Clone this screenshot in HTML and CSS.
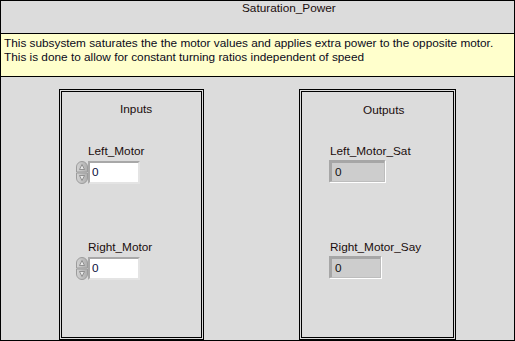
FILE: index.html
```html
<!DOCTYPE html>
<html>
<head>
<meta charset="utf-8">
<link rel="stylesheet" href="styles.css">
</head>
<body>
<div class="frame">
  <div class="title">Saturation_Power</div>
  <div class="desc">This subsystem saturates the the motor values and applies extra power to the opposite motor.<br>This is done to allow for constant turning ratios independent of speed</div>
  <div class="panels">
    <div class="box box-in">
      <div class="heading">Inputs</div>
      <div class="label lbl-first">Left_Motor</div>
      <div class="control">
        <svg class="spin" width="12" height="23" viewBox="0 0 12 23">
          <defs>
            <linearGradient id="g1" x1="0" y1="0" x2="1" y2="0">
              <stop offset="0" stop-color="#d4d4d4"/>
              <stop offset="1" stop-color="#aeaeae"/>
            </linearGradient>
          </defs>
          <path d="M0.5 11 V6 A5.5 5.5 0 0 1 11.5 6 V11 Z" fill="url(#g1)" stroke="#9c9c9c"/>
          <path d="M0.5 12 V17 A5.5 5.5 0 0 0 11.5 17 V12 Z" fill="url(#g1)" stroke="#9c9c9c"/>
          <path d="M6 3.5 L8.5 8.5 H3.5 Z" fill="#e8e8e8" stroke="#808080" stroke-width="0.8"/>
          <path d="M6 19.5 L8.5 14.5 H3.5 Z" fill="#e8e8e8" stroke="#808080" stroke-width="0.8"/>
        </svg>
        <div class="num-in">0</div>
      </div>
      <div class="label lbl-second">Right_Motor</div>
      <div class="control">
        <svg class="spin" width="12" height="23" viewBox="0 0 12 23">
          <path d="M0.5 11 V6 A5.5 5.5 0 0 1 11.5 6 V11 Z" fill="url(#g1)" stroke="#9c9c9c"/>
          <path d="M0.5 12 V17 A5.5 5.5 0 0 0 11.5 17 V12 Z" fill="url(#g1)" stroke="#9c9c9c"/>
          <path d="M6 3.5 L8.5 8.5 H3.5 Z" fill="#e8e8e8" stroke="#808080" stroke-width="0.8"/>
          <path d="M6 19.5 L8.5 14.5 H3.5 Z" fill="#e8e8e8" stroke="#808080" stroke-width="0.8"/>
        </svg>
        <div class="num-in">0</div>
      </div>
    </div>
    <div class="box box-out">
      <div class="heading">Outputs</div>
      <div class="label lbl-first">Left_Motor_Sat</div>
      <div class="ind ind-a">0</div>
      <div class="label lbl-second-out">Right_Motor_Say</div>
      <div class="ind ind-b">0</div>
    </div>
  </div>
</div>
</body>
</html>
```

FILE: styles.css
```css
html, body {
  margin: 0;
  padding: 0;
}
body {
  font-family: "Liberation Sans", Arial, sans-serif;
  font-size: 11.8px;
  line-height: 15px;
  color: #1a0d0d;
}
.frame {
  width: 515px;
  height: 341px;
  box-sizing: border-box;
  border: 1px solid #000;
  background: #dcdcdc;
  display: flex;
  flex-direction: column;
  overflow: hidden;
}
.title {
  height: 32px;
  padding-left: 241px;
  box-sizing: border-box;
  flex: none;
}
.desc {
  flex: none;
  height: 44px;
  box-sizing: border-box;
  border-top: 1px solid #000;
  border-bottom: 1px solid #000;
  background: #ffffcc;
  padding: 2px 0 0 3px;
  line-height: 14px;
  color: #0a0a1a;
}
.panels {
  flex: 1;
  display: flex;
  padding: 12px 0 0 58px;
  gap: 95px;
}
.box {
  border: 3px double #000;
  display: flex;
  flex-direction: column;
  align-items: flex-start;
}
.box-in {
  width: 145px;
  box-sizing: border-box;
}
.box-out {
  width: 157px;
  box-sizing: border-box;
}
.heading {
  margin-top: 10px;
}
.box-in .heading {
  margin-left: 58px;
}
.box-out .heading {
  margin-left: 61px;
  margin-top: 11px;
}
.label {
  margin-left: 26px;
}
.box-out .label {
  margin-left: 28px;
}
.lbl-first {
  margin-top: 27px;
}
.box-out .lbl-first {
  margin-top: 26px;
}
.lbl-second {
  margin-top: 56px;
}
.lbl-second-out {
  margin-top: 58px;
}
.control {
  display: flex;
  align-items: flex-start;
  margin-left: 14px;
  margin-top: 2px;
}
.spin {
  display: block;
  flex: none;
}
.num-in {
  width: 52px;
  height: 23px;
  box-sizing: border-box;
  background: #fff;
  border-top: 2px solid #a8a8a8;
  border-left: 2px solid #a8a8a8;
  border-right: 2px solid #e4e4e4;
  border-bottom: 2px solid #e4e4e4;
  padding-left: 2px;
  line-height: 19px;
  color: #0a1040;
}
.ind {
  margin-left: 27px;
  height: 22px;
  box-sizing: border-box;
  background: #cdcdcd;
  border-top: 3px solid #a6a6a6;
  border-left: 3px solid #a6a6a6;
  border-right: 1px solid #bdbdbd;
  border-bottom: 1px solid #bdbdbd;
  box-shadow: 1px 1px 0 #fff;
  padding-left: 3px;
  line-height: 18px;
  color: #111;
}
.ind-a {
  width: 56px;
  margin-top: 1px;
}
.ind-b {
  width: 52px;
  margin-top: 1px;
}
```
